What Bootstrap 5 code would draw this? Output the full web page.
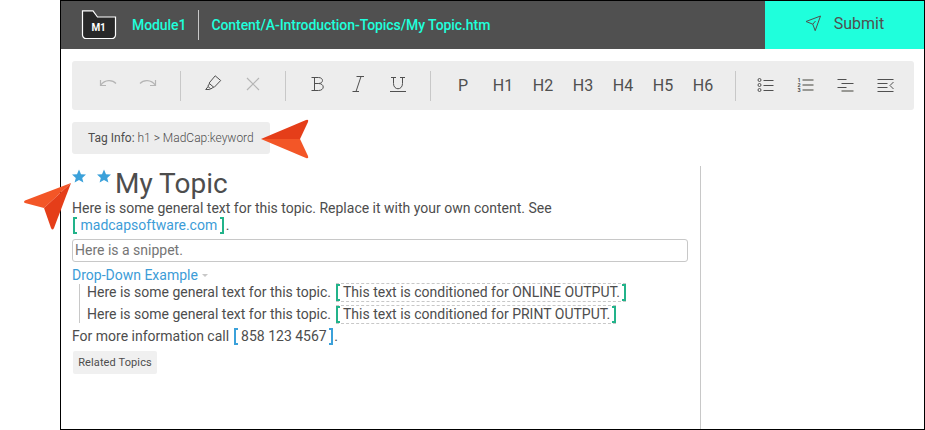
<!DOCTYPE html>
<html lang="en">
<head>
<meta charset="utf-8">
<meta name="viewport" content="width=device-width, initial-scale=1">
<title>My Topic</title>
<link href="https://cdn.jsdelivr.net/npm/bootstrap@5.3.0/dist/css/bootstrap.min.css" rel="stylesheet">
<style>
body{font-family:Roboto,"Liberation Sans",sans-serif;font-size:14px;line-height:17px;color:#4d4d4d;background:#fff;overflow:hidden}
.app-frame{width:865px;height:430px;margin-left:60px;border:1px solid #000}
.app-header{height:48px;background:#505050;color:#1fffdc;font-weight:500;font-size:14px;letter-spacing:-.07px}
.head-rule{width:1px;height:30px;background:#c8c8c8;margin:0 12px}
.folder{margin:0 15px 0 20px}
.submit-btn{width:159px;background:#1fffdc;color:#505050;font-size:16px;font-weight:400;border:0;padding:0 0 3px}
.submit-btn svg{margin-right:12px}
.tool-strip{height:49px;margin:12px 10px 0 11px;padding-left:16px;background:#ededed;border-radius:3px}
.tool{width:40px;height:40px;padding:0;border:0;background:none;color:#505050;font-size:16px;line-height:20px}
.tool svg{margin-bottom:4px}
.list-tools .tool svg{margin-bottom:2px}
.tool-rule{width:1px;height:30px;background:#c8c8c8;margin:0 12px}
.list-tools{margin-left:-2px}
.tag-info{height:32px;width:198px;margin:12px 0 0 11px;padding-left:16px;background:#ededed;border-radius:3px;font-size:12px}
.tag-info span{font-weight:300}
.editor{width:640px;height:263px;margin-top:12px;padding-left:11px;border-right:1px solid #c8c8c8}
.topic-title{font-size:28px;line-height:36px;font-weight:400;margin:0;height:34px}
.topic-title svg{margin-top:3px}
.sky{color:#3c9cd7}
.bk{display:inline-block;position:relative;height:17px;line-height:17px;padding:0 7px 0 8.5px;margin-right:1.5px;vertical-align:top}
.bk::before,.bk::after{content:"";position:absolute;top:0;bottom:0;width:4px;border:2px solid #22b38a}
.bk::before{left:1px;border-right:0}
.bk::after{right:0;border-left:0}
.bk-blue{padding-right:6px}
.bk-blue::before,.bk-blue::after{border-color:#3ba1da}
.cond{height:19px;border-top:1px dashed #c8c8c8;border-bottom:1px dashed #c8c8c8;margin-top:-1px;margin-left:1.5px;padding-left:7px;padding-right:6px}
.cond::before{left:0}
.snippet{width:616px;height:23px;border:1px solid #c8c8c8;border-radius:3px;padding:2px 2px;color:#757575;margin-top:5px}
.drop-head{margin-top:5px;height:17px}
.caret{width:0;height:0;border:3px solid transparent;border-top-color:#c8c8c8;border-bottom:0;margin-left:4px}
.drop-body{margin:0 0 0 7px;padding-left:7px;border-left:1px solid #c8c8c8;height:39px}
.drop-body p{height:22px;margin:0}
.call-line{margin-top:5px}
.related{margin:6px 0 0 1px;height:23px;width:84px;background:#f0f0f0;border-radius:2px;font-size:11px;letter-spacing:.12px;border:0;color:#4d4d4d;padding:0}
.pointer-a{position:absolute;left:261px;top:118px}
.pointer-b{position:absolute;left:23px;top:174px}
</style>
<script src="https://cdn.jsdelivr.net/npm/bootstrap@5.3.0/dist/js/bootstrap.bundle.min.js"></script>
</head>
<body class="position-relative">
<main class="app-frame">
  <header class="app-header d-flex align-items-center">
    <svg class="folder" width="36" height="30" viewBox="0 0 36 30"><path d="M1.500 .800H12l4.500 6.200H34.500V25a3.500 3.500 0 0 1-3.500 3.500H5A3.500 3.500 0 0 1 1.500 25Z" fill="#282828" stroke="#fff" stroke-width="1.200"/><text x="17.600" y="21" text-anchor="middle" font-size="10" font-weight="700" fill="#fff">M1</text></svg>
    <span>Module1</span><span class="head-rule"></span><span>Content/A-Introduction-Topics/My Topic.htm</span>
    <button class="submit-btn ms-auto h-100 d-flex align-items-center justify-content-center"><svg width="17" height="17" viewBox="0 0 17 17" fill="none" stroke="#505050"><path d="M1 6.500 15.500 1 10.200 15.700 7.800 9.200ZM7.800 9.200 10.500 6"/></svg>Submit</button>
  </header>

  <div class="tool-strip d-flex align-items-center">
    <button class="tool"><svg width="18" height="10" viewBox="0 0 18 10" fill="none" stroke="#b5b5b5" stroke-width="1.200"><path d="M1.500 1V6.500H7M1.700 6.200C6 .3 13.500 .600 17 4.500"/></svg></button>
    <button class="tool"><svg width="18" height="10" viewBox="0 0 18 10" fill="none" stroke="#b5b5b5" stroke-width="1.200"><path d="M16.500 1V6.500H11M16.300 6.200C12 .3 4.500 .600 1 4.500"/></svg></button>
    <span class="tool-rule"></span>
    <button class="tool"><svg width="18" height="18" viewBox="0 0 18 18" fill="none" stroke="#505050"><path d="M11.200 .800 16.700 5.500 10 12.500 5 8.200ZM5.500 8.600 3.800 11.300 6.800 14 9.500 12.100M4.100 11.600 1.700 14.500H5.700L6.500 13.800"/></svg></button>
    <button class="tool"><svg width="14" height="14" viewBox="0 0 14 14" fill="none" stroke="#b5b5b5" stroke-width="1.200"><path d="m1 1 12 12M13 1 1 13"/></svg></button>
    <span class="tool-rule"></span>
    <button class="tool"><svg width="18" height="20" viewBox="0 0 18 20" fill="none" stroke="#505050"><path d="M2.500 3.500H9.500C14.800 3.500 14.800 9.500 9.500 9.500H5.500M9.500 9.500C15.800 9.500 15.800 16.500 9.500 16.500H2.500M5.500 3.500V16.500"/></svg></button>
    <button class="tool"><svg width="18" height="20" viewBox="0 0 18 20" fill="none" stroke="#505050"><path d="M7.500 2.500H15M3.500 17.500H10M12 2.500 7 17.500"/></svg></button>
    <button class="tool"><svg width="18" height="20" viewBox="0 0 18 20" fill="none" stroke="#505050"><path d="M2 3.500H7M11 3.500H16M4.500 3.500V9.500C4.500 16.500 13.500 16.500 13.500 9.500V3.500M1 17.500H17"/></svg></button>
    <span class="tool-rule"></span>
    <button class="tool">P</button><button class="tool">H1</button><button class="tool">H2</button><button class="tool">H3</button><button class="tool">H4</button><button class="tool">H5</button><button class="tool">H6</button>
    <span class="tool-rule"></span>
    <div class="list-tools d-flex">
      <button class="tool"><svg width="18" height="16" viewBox="0 0 18 16" fill="none" stroke="#505050"><circle cx="2.500" cy="3" r="1.500"/><circle cx="2.500" cy="8" r="1.500"/><circle cx="2.500" cy="13" r="1.500"/><path d="M6.500 3.500H16.500M6.500 8.500H16.500M6.500 13.500H16.500"/></svg></button>
      <button class="tool"><svg width="18" height="16" viewBox="0 0 18 16"><path d="M5.500 3H16.500M5.500 8H16.500M5.500 13H16.500" stroke="#989894" stroke-width="2"/><g fill="#505050" font-size="5.500" font-weight="700"><text x=".5" y="5">1</text><text x=".5" y="10">2</text><text x=".5" y="15">3</text></g></svg></button>
      <button class="tool"><svg width="18" height="16" viewBox="0 0 18 16" fill="none" stroke="#505050"><path d="M.5 2.500H9.500M4.500 6.500H16.500M.5 10.500H9.500"/><path d="M4.500 14H16.500" stroke="#989894" stroke-width="2"/></svg></button>
      <button class="tool"><svg width="18" height="16" viewBox="0 0 18 16" fill="none" stroke="#505050"><path d="M.5 2.500H16.500M.5 6.500H10.500M.5 10.500H10.500M.5 14.500H16.500M16.500 5 13 8.500 16.500 12"/></svg></button>
    </div>
  </div>

  <div class="tag-info d-flex align-items-center"><div>Tag Info: <span>h1 &gt; MadCap:keyword</span></div></div>

  <article class="editor">
    <h1 class="topic-title d-flex align-items-start"><svg width="43" height="16" viewBox="0 0 43 16" fill="#3ba1da"><path id="s" d="M7 .500 9 5.200 14 5.600 10.200 8.900 11.400 13.600 7 11.100 2.600 13.600 3.800 8.900 0 5.600 5 5.200Z"/><use href="#s" x="25"/></svg>My Topic</h1>
    <div>Here is some general text for this topic. Replace it with your own content. See</div>
    <div><span class="bk sky">madcapsoftware.com</span>.</div>
    <div class="snippet">Here is a snippet.</div>
    <div class="drop-head d-flex align-items-center sky">Drop-Down Example<span class="caret"></span></div>
    <div class="drop-body">
      <p>Here is some general text for this topic. <span class="bk cond">This text is conditioned for ONLINE OUTPUT.</span></p>
      <p>Here is some general text for this topic. <span class="bk cond">This text is conditioned for PRINT OUTPUT.</span></p>
    </div>
    <div class="call-line">For more information call <span class="bk bk-blue">858 123 4567</span>.</div>
    <button class="related d-block">Related Topics</button>
  </article>
</main>
<svg class="pointer-a" width="50" height="42" viewBox="0 0 50 42"><path d="M0 21 45 2Q48 1 47 4L39 21Z" fill="#e53e19"/><path d="M0 21 45 40Q48 41 47 38L39 21Z" fill="#f35627"/></svg>
<svg class="pointer-b" width="50" height="58" viewBox="0 0 50 58"><path d="M48 9 2 26.500Q0 28 2 29L21 34Z" fill="#f35627"/><path d="M48 9 31 54Q29.500 57 28 54L21 34Z" fill="#e53e19"/></svg>
</body>
</html>
